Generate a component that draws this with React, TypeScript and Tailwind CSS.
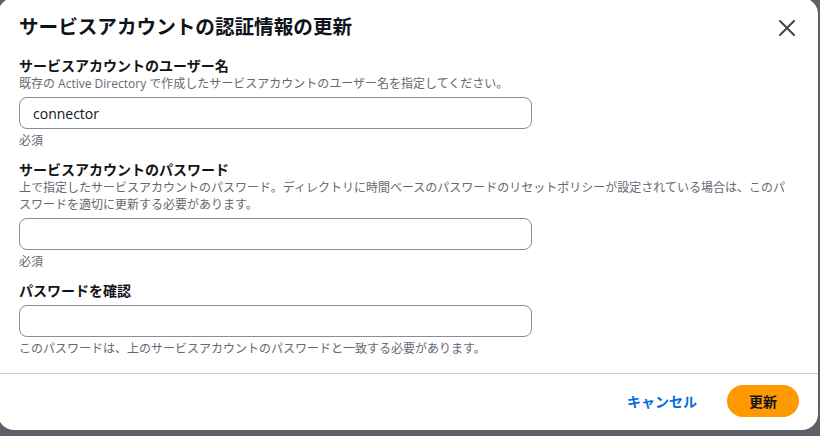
import React from "react";

const font = { fontFamily: '"Open Sans", "Noto Sans CJK JP", sans-serif' };

function Field({
  label,
  desc,
  value,
  constraint,
}: {
  label: string;
  desc?: React.ReactNode;
  value?: string;
  constraint?: string;
}) {
  return (
    <div className="flex flex-col">
      <div className="text-[14px] leading-[18px] font-bold text-[#0f141a]">{label}</div>
      {desc && <div className="text-[12px] leading-[17px] text-[#656871] pr-[30px]">{desc}</div>}
      <div className="mt-[5px] w-[513px] h-[32px] rounded-[8px] border border-[#8c8c94] bg-white flex items-center px-[13px] text-[14px] text-[#0f141a]">
        {value}
      </div>
      {constraint && (
        <div className="mt-[4px] text-[12px] leading-[16px] text-[#656871]">{constraint}</div>
      )}
    </div>
  );
}

export default function App() {
  return (
    <div className="w-[820px] h-[436px] bg-[#5c6069] overflow-hidden" style={font}>
      <div className="-mt-[2px] -ml-[2px] w-[820px] h-[432px] bg-white rounded-[16px] flex flex-col">
        <div className="flex items-center justify-between pl-[21px] pr-[22px] pt-[15px]">
          <h1 className="text-[19.6px] leading-[28px] font-bold text-[#0f141a]">
            サービスアカウントの認証情報の更新
          </h1>
          <svg width="18" height="18" viewBox="0 0 18 18" className="mt-[2px]">
            <path d="M2 2 L16 16 M16 2 L2 16" stroke="#424650" strokeWidth="2" strokeLinecap="round" />
          </svg>
        </div>
        <div className="flex flex-col pl-[21px] pt-[16px] gap-[12px]">
          <Field
            label="サービスアカウントのユーザー名"
            desc="既存の Active Directory で作成したサービスアカウントのユーザー名を指定してください。"
            value="connector"
            constraint="必須"
          />
          <Field
            label="サービスアカウントのパスワード"
            desc="上で指定したサービスアカウントのパスワード。ディレクトリに時間ベースのパスワードのリセットポリシーが設定されている場合は、このパスワードを適切に更新する必要があります。"
            constraint="必須"
          />
          <Field label="パスワードを確認" constraint="このパスワードは、上のサービスアカウントのパスワードと一致する必要があります。" />
        </div>
        <div className="mt-[16px] border-t border-[#c6c6cd]" />
        <div className="flex items-center justify-end pr-[19px] pt-[11px] gap-[30px]">
          <span className="text-[14px] font-bold text-[#006ce0]">キャンセル</span>
          <span className="w-[72px] h-[32px] rounded-full bg-[#ff9900] flex items-center justify-center text-[14px] font-bold text-[#0f141a]">
            更新
          </span>
        </div>
      </div>
    </div>
  );
}
